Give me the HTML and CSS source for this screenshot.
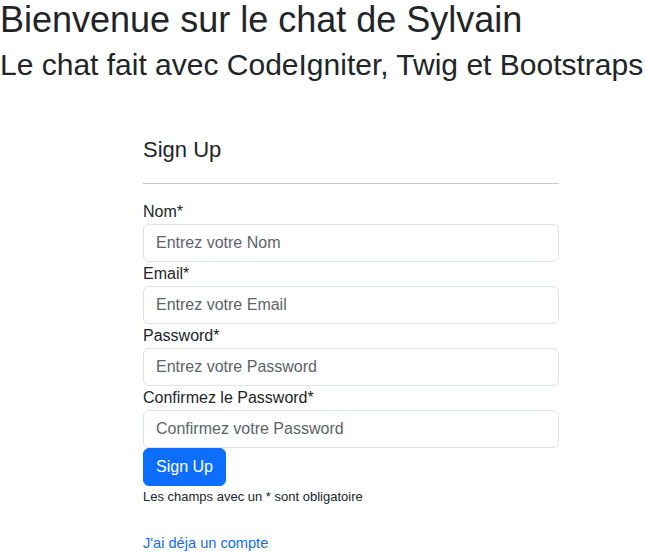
FILE: index.html
```html
<!DOCTYPE html>
<html lang="fr">
<head>
<meta charset="utf-8">
<title>Chat de Sylvain</title>
<link rel="stylesheet" href="styles.css">
</head>
<body>
<h1 class="title">Bienvenue sur le chat de Sylvain</h1>
<h2 class="subtitle">Le chat fait avec CodeIgniter, Twig et Bootstraps</h2>
<main class="signup">
  <h4 class="signup-title">Sign Up</h4>
  <hr class="divider">
  <form class="signup-form">
    <label class="field-label" for="nom">Nom*</label>
    <input class="field-input" id="nom" type="text" placeholder="Entrez votre Nom">
    <label class="field-label" for="email">Email*</label>
    <input class="field-input" id="email" type="email" placeholder="Entrez votre Email">
    <label class="field-label" for="pwd">Password*</label>
    <input class="field-input" id="pwd" type="password" placeholder="Entrez votre Password">
    <label class="field-label" for="pwd2">Confirmez le Password*</label>
    <input class="field-input" id="pwd2" type="password" placeholder="Confirmez votre Password">
    <button class="btn-primary" type="button">Sign Up</button>
    <p class="note">Les champs avec un * sont obligatoire</p>
  </form>
  <a class="login-link" href="#">J'ai déja un compte</a>
</main>
</body>
</html>
```
FILE: styles.css
```css
* { box-sizing: border-box; }
body {
  margin: 0;
  font-family: "Liberation Sans", Arial, sans-serif;
  font-size: 16px;
  line-height: 1.5;
  color: #212529;
  background: #fff;
}
.title {
  margin: 0 0 7px;
  font-size: 36px;
  font-weight: 500;
  line-height: 40px;
}
.subtitle {
  margin: 0;
  font-size: 30px;
  font-weight: 500;
  line-height: 36px;
}
.signup {
  margin: 54px 0 0 143px;
  width: 416px;
}
.signup-title {
  margin: 0;
  font-size: 22px;
  font-weight: 500;
  line-height: 26px;
}
.divider {
  margin: 20px 0 16px;
  border: 0;
  border-top: 1px solid #c8c9ca;
}
.signup-form {
  display: flex;
  flex-direction: column;
  align-items: flex-start;
}
.field-label {
  display: block;
  line-height: 24px;
}
.field-input {
  display: block;
  width: 100%;
  height: 38px;
  padding: 6px 12px;
  font-family: inherit;
  font-size: 16px;
  line-height: 1.5;
  color: #212529;
  background: #fff;
  border: 1px solid #dee2e6;
  border-radius: 6px;
}
.field-input::placeholder { color: #5c636a; opacity: 1; }
.btn-primary {
  height: 38px;
  padding: 6px 12px;
  font-family: inherit;
  font-size: 16px;
  line-height: 1.5;
  color: #fff;
  background: #0d6efd;
  border: 1px solid #0d6efd;
  border-radius: 6px;
}
.note {
  margin: 0 0 24px;
  padding-top: 1px;
  font-size: 13px;
  line-height: 1.5;
}
.login-link {
  display: block;
  font-size: 14.6px;
  line-height: 24px;
  color: #0d6efd;
  text-decoration: none;
}
```
